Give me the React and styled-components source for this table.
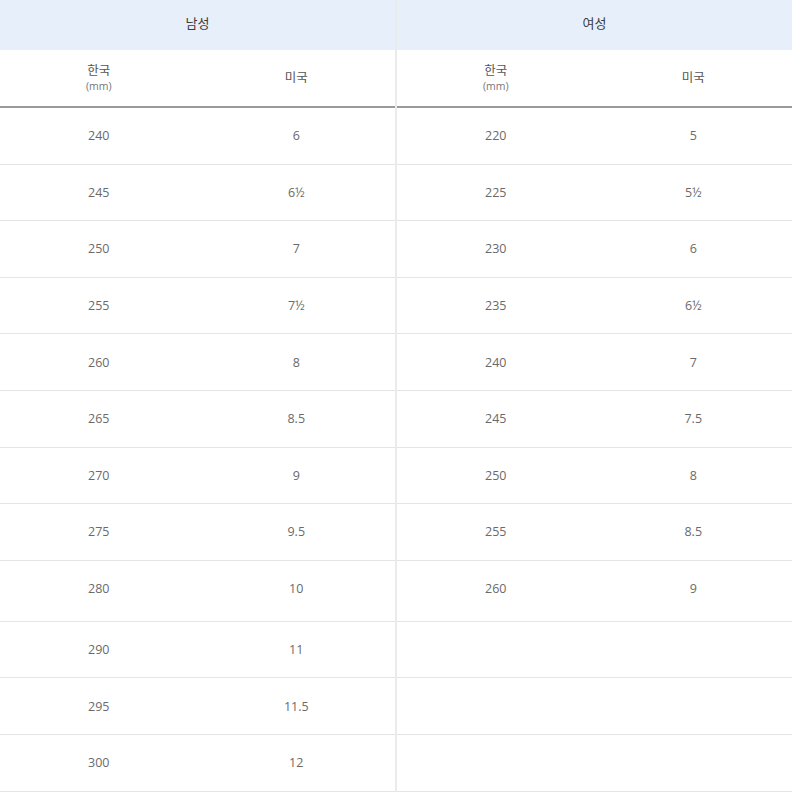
import styled, { createGlobalStyle } from "styled-components";

const men = [
  ["240", "6"], ["245", "6½"], ["250", "7"], ["255", "7½"],
  ["260", "8"], ["265", "8.5"], ["270", "9"], ["275", "9.5"],
  ["280", "10"], ["290", "11"], ["295", "11.5"], ["300", "12"],
];

const women = [
  ["220", "5"], ["225", "5½"], ["230", "6"], ["235", "6½"],
  ["240", "7"], ["245", "7.5"], ["250", "8"], ["255", "8.5"],
  ["260", "9"], ["", ""], ["", ""], ["", ""],
];

const GlobalStyle = createGlobalStyle`
  body {
    margin: 0;
    background: #ffffff;
    font-family: "Open Sans", "Noto Sans CJK KR", sans-serif;
  }
`;

const Page = styled.div`
  display: flex;
  width: 792px;
`;

const Panel = styled.div`
  flex: 1;
  display: flex;
  flex-direction: column;
  border-left: ${p => (p.$divided ? "2px solid #ebebeb" : "none")};
`;

const Title = styled.div`
  height: 50px;
  display: flex;
  align-items: center;
  justify-content: center;
  padding-bottom: 5px;
  box-sizing: border-box;
  background: #e7f0fa;
  font-family: "Noto Sans CJK KR", sans-serif;
  font-size: 13px;
  color: #3a3a3a;
`;

const SubHead = styled.div`
  display: grid;
  grid-template-columns: 1fr 1fr;
  height: 58px;
  border-bottom: 2px solid #9a9a9a;
  box-sizing: border-box;
`;

const HeadCell = styled.div`
  display: flex;
  flex-direction: column;
  align-items: center;
  justify-content: center;
  padding-bottom: 2px;
  font-family: "Noto Sans CJK KR", sans-serif;
  font-size: 12.5px;
  line-height: 18px;
  color: #555;
`;

const Unit = styled.span`
  display: block;
  font-family: "Open Sans", sans-serif;
  font-size: 10.5px;
  line-height: 15px;
  color: #777;
`;

const Row = styled.div`
  display: grid;
  grid-template-columns: 1fr 1fr;
  height: ${p => (p.$tall ? "61px" : "56.6px")};
  padding-bottom: ${p => (p.$tall ? "5px" : "0")};
  border-bottom: 1px solid #e4e4e4;
  box-sizing: border-box;
`;

const Cell = styled.div`
  display: flex;
  align-items: center;
  justify-content: center;
  font-size: 12.5px;
  color: #6a6a6a;
`;

const SizePanel = ({ title, rows, divided }) => (
  <Panel $divided={divided}>
    <Title>{title}</Title>
    <SubHead>
      <HeadCell>
        <span>한국</span>
        <Unit>(mm)</Unit>
      </HeadCell>
      <HeadCell>미국</HeadCell>
    </SubHead>
    {rows.map(([kr, us], i) => (
      <Row key={i} $tall={i === 8}>
        <Cell>{kr}</Cell>
        <Cell>{us}</Cell>
      </Row>
    ))}
  </Panel>
);

export default function App() {
  return (
    <>
      <GlobalStyle />
      <Page>
        <SizePanel title="남성" rows={men} />
        <SizePanel title="여성" rows={women} divided />
      </Page>
    </>
  );
}
